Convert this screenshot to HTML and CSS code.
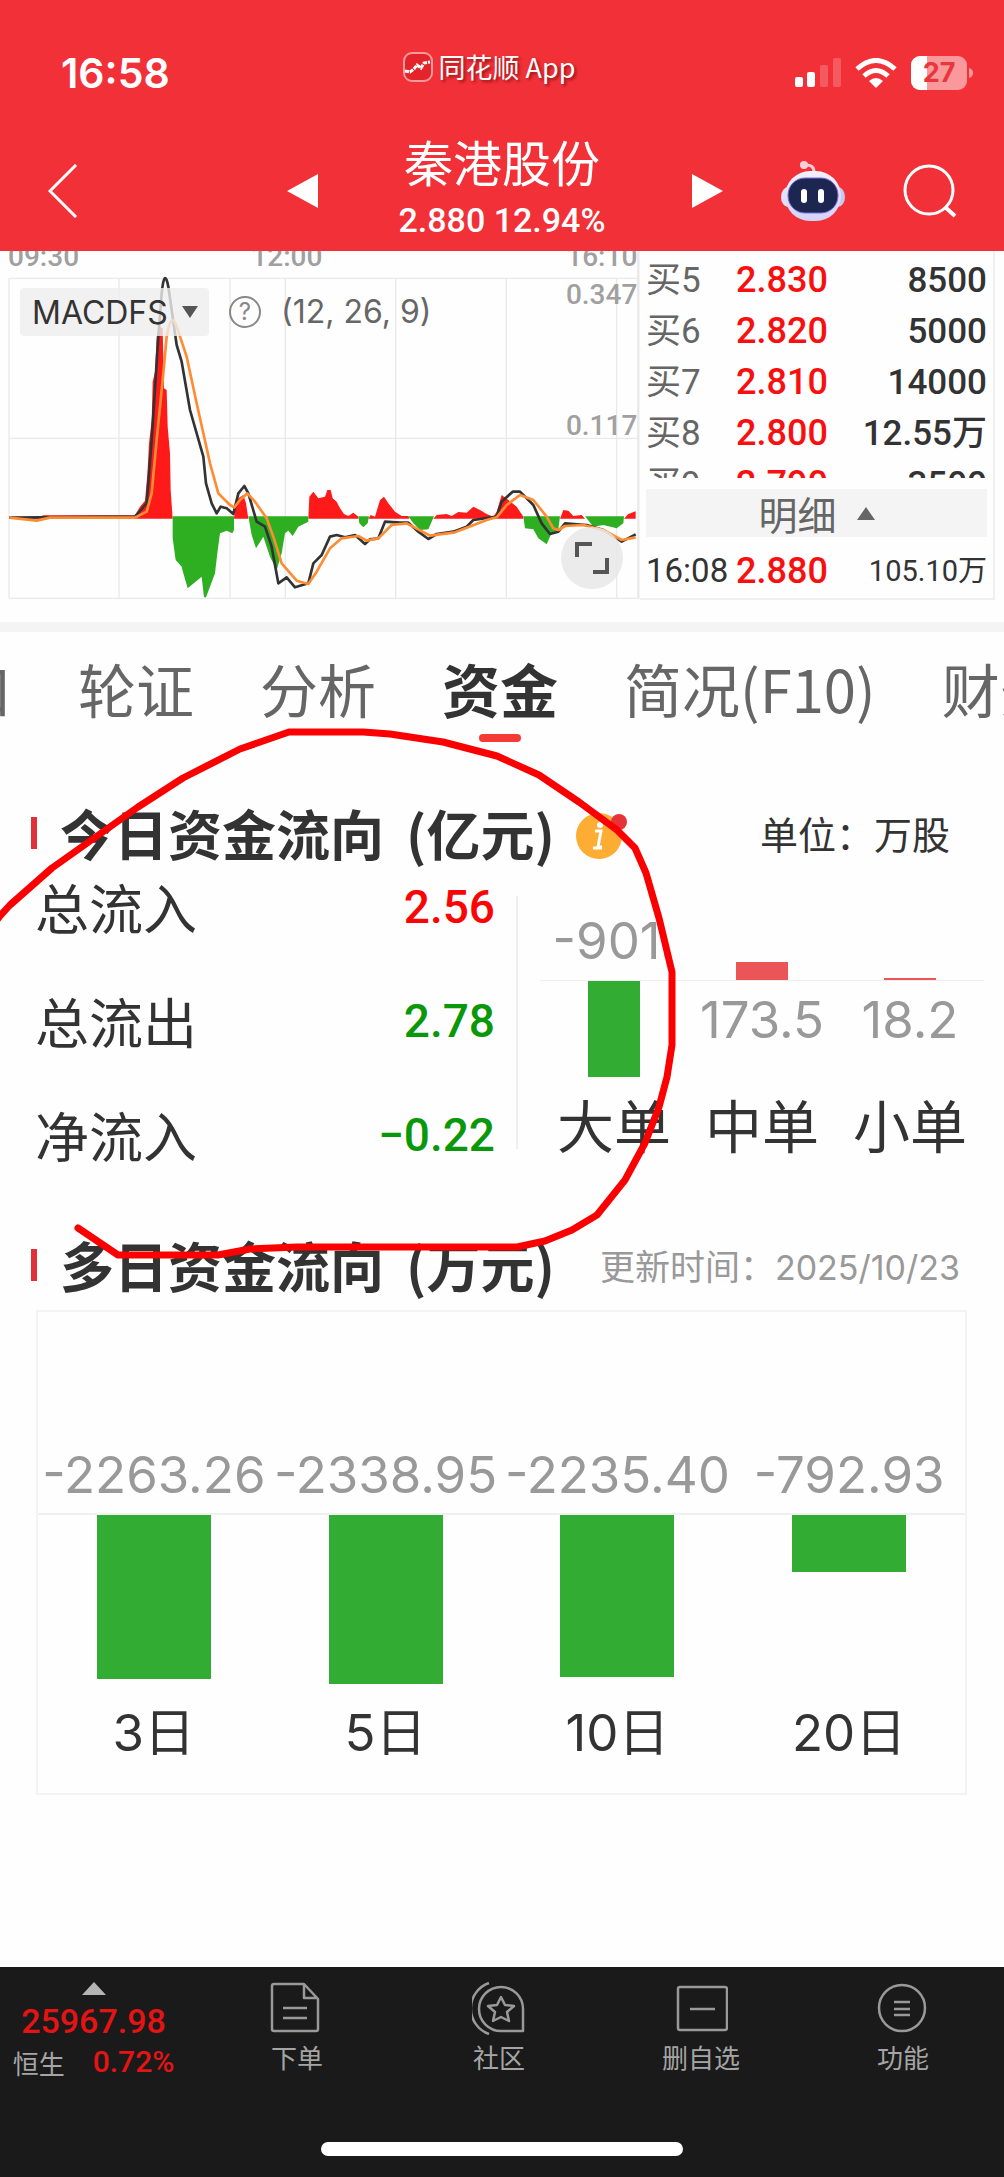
FILE: index.html
```html
<!DOCTYPE html>
<html lang="zh-CN">
<head>
<meta charset="utf-8">
<meta name="viewport" content="width=device-width, initial-scale=1">
<title>秦港股份 - 资金</title>
<link rel="stylesheet" href="styles.css">
</head>
<body>
<header class="header">
  <div class="status">
    <span class="clock">16:58</span>
    <span class="app-name">
      <svg class="app-logo" viewBox="0 0 30 30" aria-hidden="true"><rect x="1" y="1" width="28" height="28" rx="8" fill="#e3242b" stroke="#ff9a9c" stroke-width="2"/><path d="M2 19l5 1 4-3 3-4 4 3 3-5 6-1" fill="none" stroke="#fff" stroke-width="3" stroke-dasharray="4 1"/></svg>
      同花顺 App
    </span>
    <span class="status-icons">
      <svg class="signal" viewBox="0 0 46 30" aria-hidden="true"><g fill="#fff"><rect y="19" width="8" height="10" rx="2"/><rect x="12" y="14" width="8" height="15" rx="2"/><g opacity=".2"><rect x="25" y="7" width="8" height="22" rx="2"/><rect x="38" width="8" height="29" rx="2"/></g></g></svg>
      <svg class="wifi" viewBox="0 0 42 30" aria-hidden="true"><g fill="none" stroke="#fff" stroke-width="5"><path d="M2 11Q21-6 40 11"/><path d="M9 18Q21 7 33 18"/></g><path d="M14 23Q21 17 28 23L21 30Z" fill="#fff"/></svg>
      <svg class="battery" viewBox="0 0 63 34" aria-hidden="true"><rect width="56" height="34" rx="9" fill="#fb989b"/><path d="M9 0H16V34H9A9 9 0 0 1 0 25V9A9 9 0 0 1 9 0Z" fill="#fff"/><path d="M58 12Q62 13 62 17T58 22Z" fill="#fb989b"/><text x="28" y="26" text-anchor="middle" class="battery-text">27</text></svg>
    </span>
  </div>
  <div class="titlebar">
    <div class="title-left">
      <button class="icon-button" aria-label="返回"><svg width="30" height="54" viewBox="0 0 30 54"><path d="M28 1L2 27L28 53" fill="none" stroke="#fff" stroke-width="3"/></svg></button>
      <button class="icon-button" aria-label="上一只"><svg width="31" height="34" viewBox="0 0 31 34"><path d="M31 0V34L0 17Z" fill="#fff"/></svg></button>
    </div>
    <div class="stock">
      <h1 class="stock-name">秦港股份</h1>
      <p class="stock-quote">2.880 12.94%</p>
    </div>
    <div class="title-right">
      <button class="icon-button" aria-label="下一只"><svg width="31" height="34" viewBox="0 0 31 34"><path d="M0 0V34L31 17Z" fill="#fff"/></svg></button>
      <button class="icon-button" aria-label="智能助手"><svg width="66" height="60" viewBox="0 0 66 60"><defs><linearGradient id="shell" x1="0" y1="0" x2="0" y2="1"><stop offset="0" stop-color="#f4f0fb"/><stop offset="1" stop-color="#d3d2fa"/></linearGradient></defs><path d="M24 4Q34 3 34 11" fill="none" stroke="#f6c9d6" stroke-width="3"/><circle cx="24" cy="4" r="4" fill="#f6cfd9"/><ellipse cx="8" cy="36" rx="7" ry="10" fill="#dfe0fb"/><ellipse cx="58" cy="36" rx="7" ry="10" fill="#c9c6f3"/><rect x="5" y="10" width="56" height="50" rx="25" fill="url(#shell)"/><rect x="8" y="17" width="50" height="35" rx="17" fill="#1c2650" stroke="#7a6fe0" stroke-width="1"/><rect x="21" y="28" width="6" height="14" rx="3" fill="#fff"/><rect x="38" y="28" width="6" height="14" rx="3" fill="#fff"/></svg></button>
      <button class="icon-button" aria-label="搜索"><svg width="54" height="54" viewBox="0 0 54 54"><circle cx="26" cy="26" r="24" fill="none" stroke="#fff" stroke-width="3"/><path d="M42 43L52 52" stroke="#fff" stroke-width="4"/></svg></button>
    </div>
  </div>
</header>

<main class="main">
  <section class="quote">
    <div class="chart">
      <!-- MACD: histogram, DIF and DEA -->
      <svg class="chart-plot" viewBox="0 33 1920 1047" role="img" aria-label="MACD">
        <g fill="none" stroke="#e9e9e9" stroke-width="4">
          <path d="M27 115H1915M27 595H1915M27 1075H1915"/>
          <path d="M27 115V1075M357 115V1075M690 115V1075M856 115V1075M1187 115V1075M1519 115V1075M1850 115V1075"/>
          <path d="M1915 33V1077" stroke-width="7"/>
        </g>
        <g class="axis-text">
          <text x="24" y="77">09:30</text>
          <text x="754" y="77">12:00</text>
          <text x="1912" y="77" text-anchor="end">16:10</text>
          <text x="1912" y="192" text-anchor="end">0.347</text>
          <text x="1912" y="586" text-anchor="end">0.117</text>
        </g>
        <g fill="#ff1a1a">
          <path d="M28 832H115L130 826H405L420 800L435 782L442 705L447 610L455 540L458 425L465 395L470 290L478 260L488 265L492 445L500 450L503 560L510 640L512 750L518 836H28Z"/>
          <path d="M702 836L705 800L715 775L730 765L738 790L745 836Z"/>
          <path transform="translate(960 0)" d="M-35 836L-32 770L-20 755L-5 775L15 770L22 750L32 750L38 775L50 785L60 805L72 822L85 828L100 818L115 830V836ZM145 836L152 825L165 830L180 780L192 770L205 790L225 815L245 828H265L268 836ZM340 836L350 825L380 822L395 828L415 816L440 818L460 800L480 810L500 822L520 830L530 815L545 765L565 780L590 800L610 830V836ZM720 836L730 810L745 812L760 828L785 825L795 836ZM912 836L925 822L947 814V836Z"/>
        </g>
        <g fill="#2eaf22">
          <path d="M518 829V895L527 960L545 980L550 1000L563 1045L605 1010L612 1072H618L630 1040L645 1000L652 940L660 880L680 872L697 880L702 870V829ZM745 829L755 885L768 925L790 890L810 950L830 990L845 940L855 880L865 872L878 888L895 860L925 845V829Z"/>
          <path transform="translate(960 0)" d="M115 829L118 850L130 862L143 850L147 829ZM265 829L280 850L300 870L325 868L342 829ZM610 829L615 865L640 868L655 895L680 913L692 885L715 868L720 829ZM795 829L820 860L850 855L890 865L910 850L912 829Z"/>
        </g>
        <g fill="none" stroke="#333" stroke-width="8" stroke-linejoin="round">
          <path d="M28 833L405 830L440 790L455 600L475 290L485 160Q493 80 505 140L530 315L545 365L570 510L610 650L618 730L635 790L650 820L662 800L680 805L700 822L715 760L733 738L745 760L770 845L795 860L815 920L835 1030L860 1012L885 1042L925 1030L940 970L965 945L990 890L1010 885L1035 892L1065 885L1095 912L1110 898L1135 895L1155 845L1200 848L1225 848L1255 875L1285 897L1310 882L1360 875L1400 860L1420 840L1490 830L1505 785L1538 755L1560 755L1600 795L1625 850L1650 882L1675 875L1695 850L1760 855L1810 870L1865 905L1907 883"/>
          <path stroke="#ff8c32" d="M28 833L110 842L150 833H405L440 815L455 760L470 600L490 400L500 290Q513 210 530 260L560 350L590 490L630 670L655 760L690 795L703 802L720 780L742 760L765 785L800 835L820 890L845 970L890 1022L925 1032L950 995L990 925L1025 895L1075 888L1100 902L1135 895L1175 855L1220 850L1290 887L1365 877L1460 840L1490 832L1520 795L1560 765L1600 780L1640 830L1660 865L1675 870L1695 858L1750 855L1810 870L1865 900L1907 892"/>
        </g>
      </svg>
      <div class="chart-tools">
        <span class="indicator">
          <select class="indicator-select" aria-label="指标"><option>MACDFS</option></select>
          <svg class="indicator-arrow" viewBox="0 0 16 12" aria-hidden="true"><path d="M0 0H16L8 12Z" fill="#555"/></svg>
        </span>
        <button class="help" aria-label="指标说明">?</button>
        <span>(12, 26, 9)</span>
      </div>
      <button class="expand" aria-label="全屏"><svg width="34" height="34" viewBox="0 0 34 34"><path d="M2 16V3H17M18 31H32V17" fill="none" stroke="#555" stroke-width="4"/></svg></button>
    </div>
    <div class="book">
      <div class="book-scroll">
        <table class="book-table">
          <tr><th scope="row">买5</th><td class="price">2.830</td><td class="volume">8500</td></tr>
          <tr><th scope="row">买6</th><td class="price">2.820</td><td class="volume">5000</td></tr>
          <tr><th scope="row">买7</th><td class="price">2.810</td><td class="volume">14000</td></tr>
          <tr><th scope="row">买8</th><td class="price">2.800</td><td class="volume">12.55万</td></tr>
          <tr><th scope="row">买9</th><td class="price">2.790</td><td class="volume">3500</td></tr>
        </table>
      </div>
      <button class="detail">明细 <svg width="18" height="13" viewBox="0 0 18 13" aria-hidden="true"><path d="M9 0L18 13H0Z" fill="#666"/></svg></button>
      <div class="tick"><time>16:08</time><span class="tick-price">2.880</span><span class="tick-volume">105.10万</span></div>
    </div>
  </section>

  <nav class="tabs">
    <a href="#">盘口</a>
    <a href="#">轮证</a>
    <a href="#">分析</a>
    <a href="#" class="active" aria-current="page">资金</a>
    <a href="#">简况(F10)</a>
    <a href="#">财务</a>
  </nav>

  <section class="section">
    <div class="section-head">
      <h2 class="section-title">今日资金流向<span class="unit">(亿元)</span></h2>
      <button class="info" aria-label="说明"><svg width="54" height="50" viewBox="0 0 54 50"><circle cx="24" cy="26" r="23" fill="#fdac34"/><circle cx="25" cy="15" r="3" fill="#fff"/><path d="M20 21H26L23 37H27" fill="none" stroke="#fff" stroke-width="3"/><path d="M18 38H27" stroke="#fff" stroke-width="3"/><circle cx="44" cy="12" r="8" fill="#e63338"/></svg></button>
      <span class="note note-dark">单位：万股</span>
    </div>
    <div class="today">
      <dl class="totals">
        <div><dt>总流入</dt><dd class="up">2.56</dd></div>
        <div><dt>总流出</dt><dd class="down">2.78</dd></div>
        <div><dt>净流入</dt><dd class="down">−0.22</dd></div>
      </dl>
      <div class="orders">
        <div class="order">
          <div class="above"><span class="value">-901.</span></div>
          <div class="below"><i class="bar bar-down" style="height:96px"></i></div>
          <span class="name">大单</span>
        </div>
        <div class="order">
          <div class="above"><i class="bar bar-up" style="height:18px"></i></div>
          <div class="below"><span class="value">173.5</span></div>
          <span class="name">中单</span>
        </div>
        <div class="order">
          <div class="above"><i class="bar bar-up" style="height:2px"></i></div>
          <div class="below"><span class="value">18.2</span></div>
          <span class="name">小单</span>
        </div>
      </div>
    </div>
  </section>

  <section class="section section-days">
    <div class="section-head">
      <h2 class="section-title">多日资金流向<span class="unit">(万元)</span></h2>
      <span class="note">更新时间：<time>2025/10/23</time></span>
    </div>
    <div class="days">
      <div class="day"><span class="value">-2263.26</span><div class="day-plot"><i class="day-bar" style="height:164px"></i></div><span class="day-name">3日</span></div>
      <div class="day"><span class="value">-2338.95</span><div class="day-plot"><i class="day-bar" style="height:169px"></i></div><span class="day-name">5日</span></div>
      <div class="day"><span class="value">-2235.40</span><div class="day-plot"><i class="day-bar" style="height:162px"></i></div><span class="day-name">10日</span></div>
      <div class="day"><span class="value">-792.93</span><div class="day-plot"><i class="day-bar" style="height:57px"></i></div><span class="day-name">20日</span></div>
    </div>
  </section>

  <svg class="annotation" viewBox="0 251 1004 1030" aria-hidden="true"><path d="M-6 924L0 916L10 905L52 868L138 807L183 778L240 749L289 732H363L390 734L443 742L497 756L539 775L579 802L617 830L635 848L646 873L659 918L672 972V1045L667 1077L659 1107L645 1143L625 1180L597 1215L572 1230L545 1241L517 1247H297L250 1249L218 1255H118L78 1228" fill="none" stroke="#fb0000" stroke-width="7" stroke-linecap="round" stroke-linejoin="round"/></svg>
</main>

<footer class="footer">
  <nav class="toolbar">
    <a href="#" class="index">
      <svg width="24" height="13" viewBox="0 0 24 13" aria-hidden="true"><path d="M12 0L24 13H0Z" fill="#b5b5b5"/></svg>
      <span class="index-value">25967.98</span>
      <span class="index-row"><span>恒生</span><span class="index-change">0.72%</span></span>
    </a>
    <a href="#" class="tool"><svg width="54" height="54" viewBox="0 0 54 54"><g><path d="M4 3H34L48 18V48Q48 50 46 50H4Q2 50 2 48V5Q2 3 4 3ZM34 3V17H48M13 27H37M13 37H37"/></g></svg>下单</a>
    <a href="#" class="tool"><svg width="54" height="54" viewBox="0 0 54 54"><g><path d="M29 6A22 22 0 1 0 29 50H51V28A22 22 0 0 0 29 6ZM17 2A27 27 0 0 0 17 53M29 16L33 24L42 25L35 31L37 40L29 36L21 40L23 31L16 25L25 24Z"/></g></svg>社区</a>
    <a href="#" class="tool"><svg width="54" height="54" viewBox="0 0 54 54"><g><rect x="4" y="6" width="49" height="43" rx="2"/><path d="M16 28H41"/></g></svg>删自选</a>
    <a href="#" class="tool"><svg width="54" height="54" viewBox="0 0 54 54"><g><circle cx="26" cy="27" r="23"/><path d="M18 21H34M18 28H34M18 34H34"/></g></svg>功能</a>
  </nav>
  <div class="home-bar"></div>
</footer>
</body>
</html>
```
FILE: styles.css
```css
* { box-sizing: border-box; }

body {
  margin: 0;
  min-height: 100vh;
  display: flex;
  flex-direction: column;
  background: #fefefe;
  color: #333;
  font-family: "Noto Sans CJK SC", sans-serif;
  overflow-x: hidden;
}

h1, h2, p, dl, dd { margin: 0; }
a { color: inherit; text-decoration: none; }
svg { display: block; flex: none; }
button { margin: 0; padding: 0; border: 0; background: none; color: inherit; font: inherit; }

/* Header */
.header { background: #f23038; color: #fff; padding-top: 43px; }

.status {
  display: grid;
  grid-template-columns: 1fr auto 1fr;
  align-items: center;
  height: 60px;
  padding: 0 30px;
}
.clock { padding-left: 31px; font: 600 41px/60px Inter, sans-serif; }
.app-name {
  display: flex;
  align-items: center;
  gap: 6px;
  height: 48px;
  padding-right: 26px;
  align-self: start;
  font: 27px/48px "Noto Sans CJK SC", sans-serif;
  text-shadow: 2px 2px 3px rgba(90, 0, 0, .6);
}
.app-logo { width: 30px; height: 30px; }
.status-icons { display: flex; align-items: center; justify-content: flex-end; gap: 14px; }
.signal { width: 46px; height: 30px; }
.wifi { width: 42px; height: 30px; }
.battery { width: 63px; height: 34px; }
.battery-text { font: 700 27px Inter, sans-serif; fill: #e8363d; }

.titlebar {
  display: grid;
  grid-template-columns: 1fr 368px 1fr;
  align-items: center;
  height: 148px;
}
.title-left, .title-right { display: flex; align-items: center; justify-content: space-between; padding-top: 28px; }
.title-left { padding-left: 48px; }
.title-right { padding-left: 6px; padding-right: 47px; }
.icon-button { display: flex; align-items: center; }
.stock { text-align: center; padding-top: 16px; }
.stock-name { font-size: 49px; line-height: 70px; font-weight: 400; }
.stock-quote { font: 500 34px/48px Roboto, sans-serif; }

/* Chart and order book */
.main { flex: 1; position: relative; overflow: hidden; }
.quote {
  display: grid;
  grid-template-columns: 640fr 355fr;
  padding-right: 9px;
  padding-bottom: 22px;
  border-bottom: 10px solid #f4f4f4;
}
.chart { position: relative; }
.chart-plot { width: 100%; height: auto; }
.axis-text { font: 500 84px Roboto, sans-serif; fill: #a0a0a0; }
.chart-tools {
  position: absolute;
  top: 37px;
  left: 20px;
  display: flex;
  align-items: center;
  gap: 20px;
  font: 32px/48px Inter, sans-serif;
  color: #666;
}
.indicator { display: flex; align-items: center; background: rgba(238, 238, 238, .8); border-radius: 4px; padding-right: 11px; }
.indicator-select {
  appearance: none;
  height: 48px;
  width: 162px;
  padding: 0 0 0 12px;
  border: 0;
  background: none;
  color: #333;
  font: 32px Inter, sans-serif;
}
.indicator-arrow { width: 16px; height: 12px; }
.help {
  width: 32px;
  height: 32px;
  border: 2px solid #888;
  border-radius: 50%;
  color: #888;
  font: 24px/28px Inter, sans-serif;
}
.expand {
  position: absolute;
  right: 17px;
  bottom: 11px;
  width: 62px;
  height: 62px;
  border-radius: 50%;
  background: rgba(232, 232, 232, .85);
  display: flex;
  align-items: center;
  justify-content: center;
}

.book {
  border: 2px solid #f0f0f0;
  border-width: 0 2px 2px 0;
  padding: 4px 6px 0;
  display: flex;
  flex-direction: column;
  font-family: Roboto, "Noto Sans CJK SC", sans-serif;
}
.book-scroll { height: 223px; overflow: hidden; }
.book-table { width: 100%; border-collapse: collapse; table-layout: fixed; }
.book-table tr { height: 51px; }
.book-table th, .book-table td { padding: 0; line-height: 51px; text-align: left; font-weight: 500; }
.book-table th { width: 90px; font: 400 35px/51px Roboto, "Noto Sans CJK SC", sans-serif; color: #666; }
.book-table .price { width: 100px; font-size: 36px; color: #f80f0f; }
.book-table .volume { font-size: 35px; text-align: right; }
.detail {
  display: flex;
  align-items: center;
  justify-content: center;
  gap: 20px;
  margin-top: 11px;
  height: 48px;
  background: #f4f4f4;
  color: #666;
  font: 39px/44px "Noto Sans CJK SC", sans-serif;
}
.tick { flex: 1; display: grid; grid-template-columns: 90px 100px 1fr; align-items: center; padding-top: 7px; font-size: 33px; line-height: 48px; }
.tick-price { font-size: 36px; font-weight: 500; color: #f80f0f; }
.tick-volume { font-size: 29px; text-align: right; }

/* Tabs */
.tabs {
  display: flex;
  gap: 66px;
  margin-left: -104px;
  padding: 26px 0 57px;
  font-size: 58px;
  line-height: 60px;
  color: #666;
  white-space: nowrap;
}
.tabs .active { position: relative; font-weight: 700; color: #333; }
.tabs .active::after {
  content: "";
  position: absolute;
  left: 50%;
  bottom: -24px;
  width: 42px;
  height: 8px;
  margin-left: -21px;
  border-radius: 4px;
  background: #f63b37;
}

/* Money flow */
.section { padding: 30px 20px 0 31px; }
.section-days { padding: 72px 37px 0 31px; }
.section-head { display: flex; align-items: center; height: 60px; padding-right: 12px; }
.section-days .section-head { padding-right: 7px; }
.section-title {
  display: flex;
  align-items: center;
  padding-bottom: 4px;
  font-size: 54px;
  line-height: 56px;
  font-weight: 700;
  white-space: nowrap;
}
.section-title::before { content: ""; width: 6px; height: 32px; margin-right: 23px; background: #e03038; }
.unit { margin-left: 22px; }
.info { margin-left: 20px; }
.note { margin-left: auto; font: 35px/60px Inter, "Noto Sans CJK SC", sans-serif; color: #999; white-space: nowrap; }
.note time { font-size: 34px; }
.note-dark { margin-right: 22px; font-size: 38px; color: #333; }

.today { display: grid; grid-template-columns: 459fr 488fr; padding: 12px 0 0 4px; }
.totals { display: grid; gap: 54px; align-content: start; }
.totals div { display: flex; align-items: center; justify-content: space-between; height: 60px; }
.totals dt { font-size: 54px; line-height: 60px; }
.totals dd { font: 500 46px/60px Roboto, sans-serif; }
.up { color: #fa0505; }
.down { color: #0a980a; }
.orders {
  display: grid;
  grid-template-columns: repeat(3, minmax(0, 1fr));
  margin: 19px 0 0 21px;
  padding-left: 22px;
  border-left: 2px solid #eee;
  height: 253px;
}
.order, .day { display: flex; flex-direction: column; align-items: center; }
.above { display: flex; flex-direction: column; align-items: center; justify-content: flex-end; width: 100%; height: 84px; }
.above .value { margin-bottom: 11px; }
.below { display: flex; flex-direction: column; align-items: center; width: 100%; height: 113px; border-top: 1px solid #eee; }
.below .value { margin-top: 11px; }
.value { font: 51px/56px Inter, sans-serif; color: #999; white-space: nowrap; }
.bar { width: 52px; }
.bar-up { background: #ec5558; }
.bar-down { background: #33ac33; }
.name { font-size: 57px; line-height: 60px; }

.days {
  display: grid;
  grid-template-columns: repeat(4, minmax(0, 1fr));
  margin: 13px 0 0 5px;
  padding: 135px 0 30px;
  border: 2px solid #f3f3f3;
}
.day-plot { display: flex; justify-content: center; width: 100%; height: 190px; margin-top: 10px; border-top: 2px solid #f0f0f0; }
.day-bar { width: 114px; background: #33ac33; }
.day-name { font: 51px/60px Inter, "Noto Sans CJK SC", sans-serif; }

/* Bottom bar */
.footer { background: #1a1a1a; color: #a5a5a5; padding-bottom: 21px; }
.toolbar { display: grid; grid-template-columns: 196fr repeat(4, 202fr); height: 175px; font-size: 26px; }
.index { display: flex; flex-direction: column; align-items: center; padding: 15px 9px 0 0; }
.index-value { margin-top: 6px; font: 500 34px/40px Roboto, sans-serif; color: #e51414; }
.index-row { display: flex; gap: 28px; align-items: center; height: 42px; }
.index-change { font: 500 30px/42px Roboto, sans-serif; color: #e51414; }
.tool { display: flex; flex-direction: column; align-items: center; gap: 2px; padding-top: 14px; line-height: 40px; }
.tool g { fill: none; stroke: #999; stroke-width: 2.5; stroke-linejoin: round; }
.home-bar { width: 36%; height: 14px; margin: 0 auto; border-radius: 7px; background: #fff; }

.annotation { position: absolute; top: 0; left: 0; width: 100%; pointer-events: none; }
```
